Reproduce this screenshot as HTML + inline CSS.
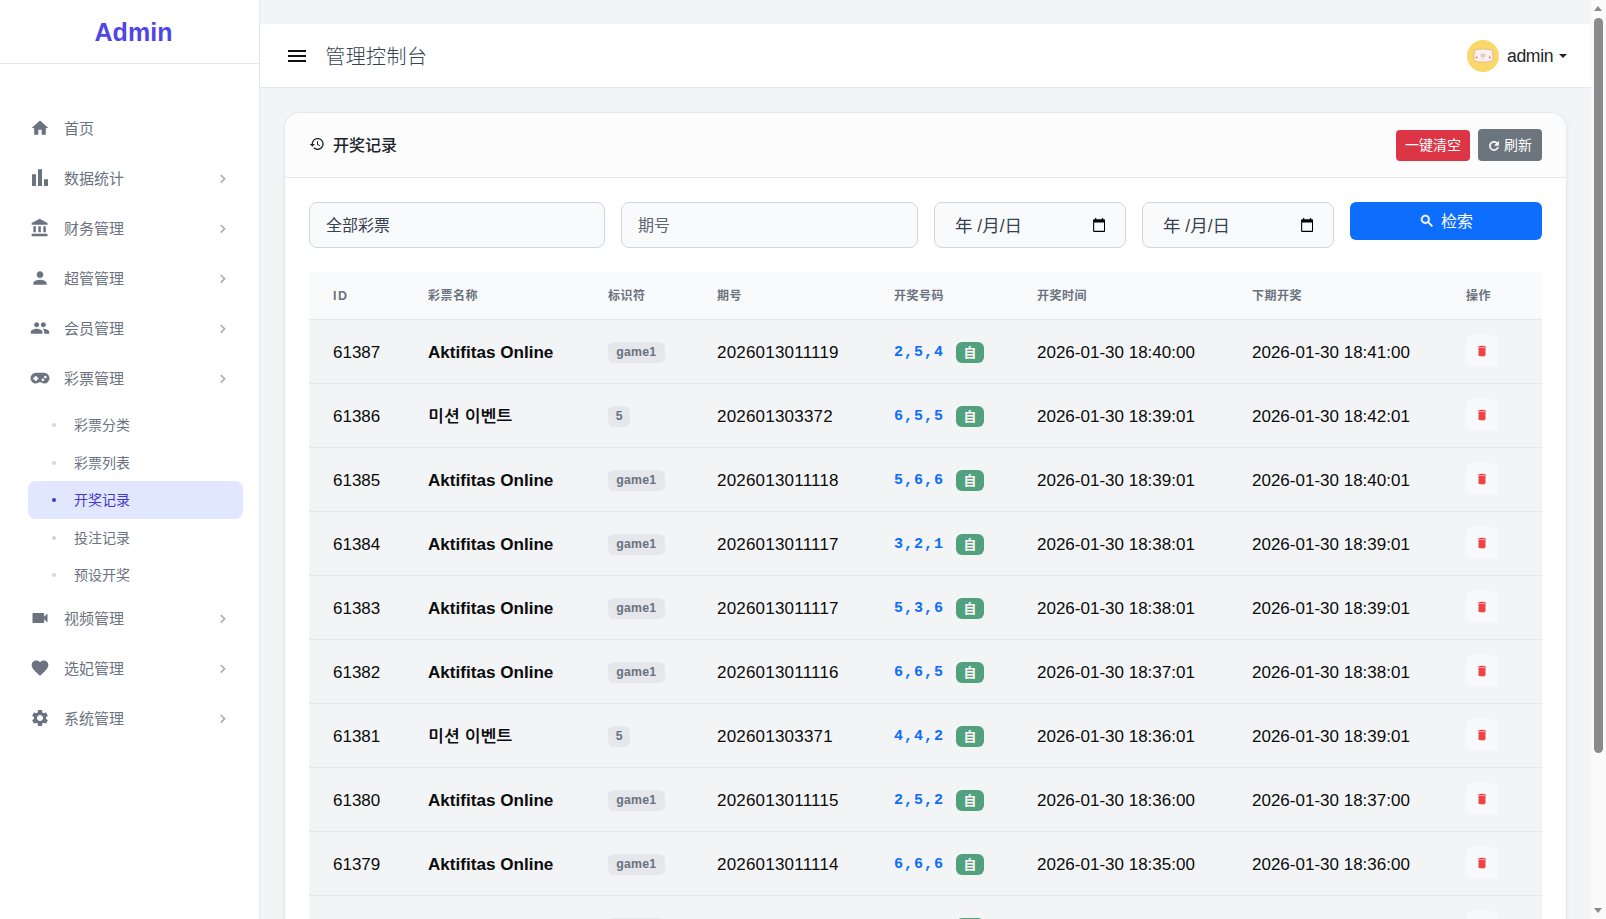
<!DOCTYPE html>
<html lang="zh-CN">
<head>
<meta charset="utf-8">
<title>管理控制台</title>
<style>
*{box-sizing:border-box;margin:0;padding:0}
html,body{width:1606px;height:919px;overflow:hidden}
body{font-family:"Liberation Sans","Noto Sans CJK SC","NanumGothic",sans-serif;background:#f3f4f6;color:#111;position:relative}
svg{display:block}
.abs{position:absolute}
/* sidebar */
#side{position:absolute;left:0;top:0;width:260px;height:919px;background:#fff;border-right:1px solid #e5e7eb}
#brand{position:absolute;left:0;top:0;width:259px;height:64px;border-bottom:1px solid #e5e7eb;text-align:center;line-height:64.500px;font-size:25px;font-weight:700;color:#4f46e5;padding-left:8px;letter-spacing:.05px}
.nav{position:absolute;left:16px;width:227px;height:44px;color:#6b7280;font-size:15px;line-height:44px}
.nav .ic{position:absolute;left:14px;top:11.25px;width:20px;height:20px;fill:#6b7280}
.nav .tx{position:absolute;left:48px;top:0}
.nav .ch{position:absolute;left:198.1px;top:12.5px;width:17.5px;height:17.5px;fill:#a3a8b3}
.sub{position:absolute;left:28px;width:215px;height:38px;border-radius:8px;color:#6b7280;font-size:14px;line-height:38px}
.sub .dot{position:absolute;left:24px;top:17px;width:4px;height:4px;border-radius:50%;background:#d1d5db}
.sub .tx{position:absolute;left:46px;top:0}
.sub.on{background:#e0e7ff;color:#4338ca}
.sub.on .dot{background:#4338ca}
/* top bar */
#top{position:absolute;left:260px;top:24px;width:1331px;height:64px;background:#fff;border-bottom:1px solid #e5e7eb}
#top .menu{position:absolute;left:25px;top:20px;width:24px;height:24px;fill:#111}
#top .ttl{position:absolute;left:65.3px;top:1px;line-height:64px;font-size:20px;font-weight:300;letter-spacing:.4px;color:#374151}
#top .av{position:absolute;left:1207px;top:16px;width:32px;height:32px;border-radius:50%;background:#fcd76c;overflow:hidden}
#top .un{position:absolute;left:1247px;top:0;line-height:65px;font-size:17.6px;letter-spacing:-.35px;color:#212529}
#top .caret{position:absolute;left:1299px;top:30px;width:0;height:0;border-left:4px solid transparent;border-right:4px solid transparent;border-top:4.500px solid #212529}
/* scrollbar */
#sb{position:absolute;left:1591px;top:0;width:15px;height:919px;background:#fafafa}
#sb .th{position:absolute;left:3px;top:18px;width:9px;height:735px;border-radius:5px;background:#8b8b8b}
#sb .up{position:absolute;left:3px;top:6px;width:0;height:0;border-left:4.700px solid transparent;border-right:4.700px solid transparent;border-bottom:5px solid #8b8b8b}
#sb .dn{position:absolute;left:3px;top:908px;width:0;height:0;border-left:4.700px solid transparent;border-right:4.700px solid transparent;border-top:5px solid #8b8b8b}
/* card */
#card{position:absolute;left:284px;top:112px;width:1283px;height:830px;background:#fff;border:1px solid #e5e7eb;border-radius:16px;overflow:hidden;box-shadow:0 1px 4px rgba(0,0,0,.05)}
#ci{position:absolute;left:1px;top:1px;width:1279px;height:828px}
#chd{position:absolute;left:-1px;top:-1px;width:1281px;height:65px;background:#fcfcfd;border-bottom:1px solid #e5e7eb}
#chd .hi{position:absolute;left:24.3px;top:23.300px;width:16px;height:16px;fill:#212529}
#chd .ht{position:absolute;left:48px;top:.600px;line-height:63px;font-size:16px;font-weight:500;color:#212529}
.btn{position:absolute;color:#fff;font-size:14px;border-radius:4px;text-align:center}
#b1{left:1111px;top:17px;width:74px;height:31px;line-height:31px;background:#dc3545}
#b2{left:1193px;top:16px;width:64px;height:32px;line-height:33px;background:#6c757d;padding-left:16px}
#b2 svg{position:absolute;left:9px;top:9.500px;width:14px;height:14px;fill:#fff;stroke:#fff;stroke-width:.9}
.inp{position:absolute;top:88px;height:46px;border:1px solid #d1d5db;border-radius:8px;background:#f9fafb;font-size:16px;line-height:46px;padding-left:16px;color:#374151}
.inp.ph{color:#5d6672}
.inp .cal{position:absolute;right:19.8px;top:14.600px;width:12.200px;height:14px}
.inp.dt{padding-left:20px;font-size:17.500px;line-height:46px}
#b3{left:1064px;top:88px;width:192px;height:38px;line-height:39px;background:#0d6efd;border-radius:6px;font-size:16px;padding-left:22px}
#b3 svg{position:absolute;left:69px;top:11px;width:16px;height:16px;fill:#fff;stroke:#fff;stroke-width:.9}
/* table */
table{position:absolute;left:23px;top:158px;width:1233px;border-collapse:separate;border-spacing:0;table-layout:fixed}
th{height:48px;background:#f9fafb;border-bottom:1px solid #e5e7eb;text-align:left;padding:0 0 1.500px 24px;font-size:12px;font-weight:700;color:#6b7280;letter-spacing:.5px}
th.id{font-size:12.500px;letter-spacing:1.600px;padding:1.500px 0 0 24px}
td{height:64px;background:#f3f4f6;border-bottom:1px solid #e5e7eb;padding:2px 0 0 24px;font-size:17px;color:#0b0b0b;white-space:nowrap}
td.nm{font-weight:700;font-size:17.1px}
td.qh{letter-spacing:.2px}
td.kr{font-family:"Liberation Sans","NanumGothic","Noto Sans CJK KR",sans-serif;font-size:16.500px;letter-spacing:.4px}
.bd{display:inline-block;height:21px;line-height:21px;width:56.700px;text-align:center;border-radius:6px;background:#e5e7eb;color:#6b7280;font-size:12.300px;letter-spacing:.2px;font-weight:700;vertical-align:middle}
.bd.f{width:22.400px}
.num{font-family:"Liberation Mono","DejaVu Sans Mono",monospace;font-weight:700;color:#0d6efd;font-size:15px;letter-spacing:1px;vertical-align:middle}
.zi{display:inline-block;width:28px;height:21px;line-height:21px;border-radius:6px;background:#50a17c;color:#fff;font-size:12.800px;font-weight:700;text-align:center;vertical-align:middle;margin-left:12px}
.del{display:block;width:32px;height:32px;border-radius:6px;background:#f8f9fa;position:relative;top:-1.100px}
.del svg{position:absolute;left:9px;top:9px;width:14px;height:14px;fill:#ef4444}
</style>
</head>
<body>
<div id="side">
  <div id="brand">Admin</div>
  <div class="nav" style="top:107px"><svg class="ic" viewBox="0 0 24 24"><path d="M10 20v-6h4v6h5v-8h3L12 3 2 12h3v8z"/></svg><span class="tx">首页</span></div>
  <div class="nav" style="top:157px"><svg class="ic" viewBox="0 0 24 24"><path d="M2.4 7.5h4.8v14H2.4zM9.600 1.500h4.800v20H9.600zM16.800 13.500h4.800v8h-4.800z"/></svg><span class="tx">数据统计</span><svg class="ch" viewBox="0 0 24 24"><path d="M10 6L8.59 7.41 13.17 12l-4.58 4.59L10 18l6-6z"/></svg></div>
  <div class="nav" style="top:207px"><svg class="ic" viewBox="0 0 24 24"><path d="M4 10v7h3v-7H4zm6 0v7h3v-7h-3zM2 22h19v-3H2v3zm14-12v7h3v-7h-3zm-4.5-9L2 6v2h19V6l-9.5-5z"/></svg><span class="tx">财务管理</span><svg class="ch" viewBox="0 0 24 24"><path d="M10 6L8.59 7.41 13.17 12l-4.58 4.59L10 18l6-6z"/></svg></div>
  <div class="nav" style="top:257px"><svg class="ic" viewBox="0 0 24 24"><path d="M12 12c2.21 0 4-1.79 4-4s-1.79-4-4-4-4 1.79-4 4 1.79 4 4 4zm0 2c-2.67 0-8 1.34-8 4v2h16v-2c0-2.66-5.33-4-8-4z"/></svg><span class="tx">超管管理</span><svg class="ch" viewBox="0 0 24 24"><path d="M10 6L8.59 7.41 13.17 12l-4.58 4.59L10 18l6-6z"/></svg></div>
  <div class="nav" style="top:307px"><svg class="ic" viewBox="0 0 24 24"><path d="M16 11c1.66 0 2.99-1.34 2.99-3S17.66 5 16 5c-1.66 0-3 1.34-3 3s1.34 3 3 3zm-8 0c1.66 0 2.99-1.34 2.99-3S9.66 5 8 5C6.34 5 5 6.34 5 8s1.34 3 3 3zm0 2c-2.33 0-7 1.17-7 3.5V19h14v-2.5c0-2.33-4.67-3.5-7-3.5zm8 0c-.29 0-.62.02-.97.05 1.16.84 1.97 1.97 1.97 3.45V19h6v-2.5c0-2.33-4.67-3.5-7-3.5z"/></svg><span class="tx">会员管理</span><svg class="ch" viewBox="0 0 24 24"><path d="M10 6L8.59 7.41 13.17 12l-4.58 4.59L10 18l6-6z"/></svg></div>
  <div class="nav" style="top:357px"><svg class="ic" viewBox="0 0 24 24"><path fill-rule="evenodd" d="M7 5.8H17A6.4 6.4 0 0 1 17 18.6C15.300 18.600 14 17.600 12.900 17.100H11.100C10 17.600 8.700 18.600 7 18.600A6.4 6.4 0 0 1 7 5.8ZM5.8 9.6V11.5H3.9V13.7H5.8V15.6H8V13.7H9.9V11.5H8V9.6ZM18.4 9.3A1.6 1.6 0 1 0 18.4 12.5A1.6 1.6 0 1 0 18.4 9.3ZM15.5 12.6A1.6 1.6 0 1 0 15.5 15.8A1.6 1.6 0 1 0 15.5 12.6Z"/></svg><span class="tx">彩票管理</span><svg class="ch" viewBox="0 0 24 24"><path d="M10 6L8.59 7.41 13.17 12l-4.58 4.59L10 18l6-6z"/></svg></div>
  <div class="nav" style="top:597px"><svg class="ic" viewBox="0 0 24 24"><path d="M17 10.5V7c0-.55-.45-1-1-1H4c-.55 0-1 .45-1 1v10c0 .55.45 1 1 1h12c.55 0 1-.45 1-1v-3.5l4 4v-11l-4 4z"/></svg><span class="tx">视频管理</span><svg class="ch" viewBox="0 0 24 24"><path d="M10 6L8.59 7.41 13.17 12l-4.58 4.59L10 18l6-6z"/></svg></div>
  <div class="nav" style="top:647px"><svg class="ic" viewBox="0 0 24 24"><path d="M12 21.35l-1.45-1.32C5.4 15.36 2 12.28 2 8.5 2 5.42 4.42 3 7.5 3c1.74 0 3.41.81 4.5 2.09C13.09 3.81 14.76 3 16.5 3 19.58 3 22 5.42 22 8.5c0 3.78-3.4 6.86-8.55 11.54L12 21.35z"/></svg><span class="tx">选妃管理</span><svg class="ch" viewBox="0 0 24 24"><path d="M10 6L8.59 7.41 13.17 12l-4.58 4.59L10 18l6-6z"/></svg></div>
  <div class="nav" style="top:697px"><svg class="ic" viewBox="0 0 24 24"><path d="M19.14 12.94c.04-.3.06-.61.06-.94 0-.32-.02-.64-.07-.94l2.03-1.58c.18-.14.23-.41.12-.61l-1.92-3.32c-.12-.22-.37-.29-.59-.22l-2.39.96c-.5-.38-1.03-.7-1.62-.94l-.36-2.54c-.04-.24-.24-.41-.48-.41h-3.84c-.24 0-.43.17-.47.41l-.36 2.54c-.59.24-1.13.57-1.62.94l-2.39-.96c-.22-.08-.47 0-.59.22L2.74 8.87c-.12.21-.08.47.12.61l2.03 1.58c-.05.3-.09.63-.09.94s.02.64.07.94l-2.03 1.58c-.18.14-.23.41-.12.61l1.92 3.32c.12.22.37.29.59.22l2.39-.96c.5.38 1.03.7 1.62.94l.36 2.54c.05.24.24.41.48.41h3.84c.24 0 .44-.17.47-.41l.36-2.54c.59-.24 1.13-.56 1.62-.94l2.39.96c.22.08.47 0 .59-.22l1.92-3.32c.12-.22.07-.47-.12-.61l-2.01-1.58zM12 15.6c-1.98 0-3.6-1.62-3.6-3.6s1.62-3.6 3.6-3.6 3.6 1.62 3.6 3.6-1.62 3.6-3.6 3.6z"/></svg><span class="tx">系统管理</span><svg class="ch" viewBox="0 0 24 24"><path d="M10 6L8.59 7.41 13.17 12l-4.58 4.59L10 18l6-6z"/></svg></div>
  <div class="sub" style="top:406px"><i class="dot"></i><span class="tx">彩票分类</span></div>
  <div class="sub" style="top:443.5px"><i class="dot"></i><span class="tx">彩票列表</span></div>
  <div class="sub on" style="top:481px"><i class="dot"></i><span class="tx">开奖记录</span></div>
  <div class="sub" style="top:518.5px"><i class="dot"></i><span class="tx">投注记录</span></div>
  <div class="sub" style="top:556px"><i class="dot"></i><span class="tx">预设开奖</span></div>
</div>
<div id="top">
  <svg class="menu" viewBox="0 0 24 24"><path d="M3 18h18v-2H3v2zm0-5h18v-2H3v2zm0-7v2h18V6H3z"/></svg>
  <div class="ttl">管理控制台</div>
  <div class="av"><svg viewBox="0 0 32 32" width="32" height="32"><path d="M7.700 9.800 10 9.700Q16 8.500 22.300 9.700L25.100 9.800 25.300 12.200Q26.500 16 25.700 19.500Q25.100 21 23 21.400Q16 22.500 9.500 21.400Q7.500 21 7.100 19.500Q6.300 16 7.500 12.200Z" fill="#fbefef" stroke="#6f6767" stroke-width=".35" stroke-dasharray="1.2 .5"/><rect x="14.100" y="14.100" width="3.700" height="2.600" rx=".7" fill="#f3cfcf" stroke="#c9a3a3" stroke-width=".5"/><path d="M8.200 17.400 10.200 16.200V18.600ZM24.100 17.400 22.100 16.200V18.600Z" fill="#f4511e"/><rect x="15.200" y="18.500" width="1.600" height="1.100" rx=".3" fill="#d9c9c9"/><circle cx="13.400" cy="11.700" r=".35" fill="#d8caca"/><circle cx="19.500" cy="11.700" r=".35" fill="#d8caca"/></svg></div>
  <div class="un">admin</div>
  <div class="caret"></div>
</div>
<div id="card"><div id="ci">
  <div id="chd">
    <svg class="hi" viewBox="0 0 24 24"><path d="M13 3c-4.97 0-9 4.03-9 9H1l3.89 3.89.07.14L9 12H6c0-3.87 3.13-7 7-7s7 3.13 7 7-3.13 7-7 7c-1.93 0-3.68-.79-4.94-2.06l-1.42 1.42C8.27 19.99 10.51 21 13 21c4.97 0 9-4.03 9-9s-4.03-9-9-9zm-1 5v5l4.28 2.54.72-1.21-3.5-2.08V8H12z"/></svg>
    <div class="ht">开奖记录</div>
    <div class="btn" id="b1">一键清空</div>
    <div class="btn" id="b2"><svg viewBox="0 0 24 24"><path d="M17.65 6.35C16.2 4.9 14.21 4 12 4c-4.42 0-7.99 3.58-7.99 8s3.57 8 7.99 8c3.73 0 6.84-2.55 7.73-6h-2.08c-.82 2.33-3.04 4-5.65 4-3.31 0-6-2.69-6-6s2.69-6 6-6c1.66 0 3.14.69 4.22 1.78L13 11h7V4l-2.35 2.35z"/></svg>刷新</div>
  </div>
  <div class="inp" style="left:23px;width:296px">全部彩票</div>
  <div class="inp ph" style="left:335px;width:297px">期号</div>
  <div class="inp dt" style="left:648px;width:192px">年 /月/日<svg class="cal" viewBox="0 0 12 14"><path fill="#000" fill-rule="evenodd" d="M2 0h1.200v1.300h5.600V0H10v1.300h1a1 1 0 0 1 1 1V13a1 1 0 0 1-1 1H1a1 1 0 0 1-1-1V2.300a1 1 0 0 1 1-1h1ZM1.100 4.400v8.400h9.800V4.400Z"/></svg></div>
  <div class="inp dt" style="left:856px;width:192px">年 /月/日<svg class="cal" viewBox="0 0 12 14"><path fill="#000" fill-rule="evenodd" d="M2 0h1.200v1.300h5.600V0H10v1.300h1a1 1 0 0 1 1 1V13a1 1 0 0 1-1 1H1a1 1 0 0 1-1-1V2.300a1 1 0 0 1 1-1h1ZM1.100 4.400v8.400h9.800V4.400Z"/></svg></div>
  <div class="btn" id="b3"><svg viewBox="0 0 24 24"><path d="M15.5 14h-.79l-.28-.27C15.41 12.59 16 11.11 16 9.5 16 5.91 13.09 3 9.5 3S3 5.91 3 9.5 5.91 16 9.5 16c1.61 0 3.09-.59 4.23-1.57l.27.28v.79l5 4.99L20.49 19l-4.99-5zm-6 0C7.01 14 5 11.99 5 9.5S7.01 5 9.5 5 14 7.01 14 9.5 11.99 14 9.5 14z"/></svg>检索</div>
  <table>
    <colgroup><col style="width:95px"><col style="width:180px"><col style="width:109px"><col style="width:177px"><col style="width:143px"><col style="width:215px"><col style="width:214px"><col style="width:100px"></colgroup>
    <thead><tr><th class="id">ID</th><th>彩票名称</th><th>标识符</th><th>期号</th><th>开奖号码</th><th>开奖时间</th><th>下期开奖</th><th>操作</th></tr></thead>
    <tbody>
    <tr><td>61387</td><td class="nm">Aktifitas Online</td><td><span class="bd">game1</span></td><td class="qh">2026013011119</td><td><span class="num">2,5,4</span><span class="zi">自</span></td><td>2026-01-30 18:40:00</td><td>2026-01-30 18:41:00</td><td><span class="del"><svg viewBox="0 0 24 24"><path d="M6 19c0 1.1.9 2 2 2h8c1.1 0 2-.9 2-2V7H6v12zM19 4h-3.5l-1-1h-5l-1 1H5v2h14V4z"/></svg></span></td></tr>
    <tr><td>61386</td><td class="nm kr">미션 이벤트</td><td><span class="bd f">5</span></td><td class="qh">202601303372</td><td><span class="num">6,5,5</span><span class="zi">自</span></td><td>2026-01-30 18:39:01</td><td>2026-01-30 18:42:01</td><td><span class="del"><svg viewBox="0 0 24 24"><path d="M6 19c0 1.1.9 2 2 2h8c1.1 0 2-.9 2-2V7H6v12zM19 4h-3.5l-1-1h-5l-1 1H5v2h14V4z"/></svg></span></td></tr>
    <tr><td>61385</td><td class="nm">Aktifitas Online</td><td><span class="bd">game1</span></td><td class="qh">2026013011118</td><td><span class="num">5,6,6</span><span class="zi">自</span></td><td>2026-01-30 18:39:01</td><td>2026-01-30 18:40:01</td><td><span class="del"><svg viewBox="0 0 24 24"><path d="M6 19c0 1.1.9 2 2 2h8c1.1 0 2-.9 2-2V7H6v12zM19 4h-3.5l-1-1h-5l-1 1H5v2h14V4z"/></svg></span></td></tr>
    <tr><td>61384</td><td class="nm">Aktifitas Online</td><td><span class="bd">game1</span></td><td class="qh">2026013011117</td><td><span class="num">3,2,1</span><span class="zi">自</span></td><td>2026-01-30 18:38:01</td><td>2026-01-30 18:39:01</td><td><span class="del"><svg viewBox="0 0 24 24"><path d="M6 19c0 1.1.9 2 2 2h8c1.1 0 2-.9 2-2V7H6v12zM19 4h-3.5l-1-1h-5l-1 1H5v2h14V4z"/></svg></span></td></tr>
    <tr><td>61383</td><td class="nm">Aktifitas Online</td><td><span class="bd">game1</span></td><td class="qh">2026013011117</td><td><span class="num">5,3,6</span><span class="zi">自</span></td><td>2026-01-30 18:38:01</td><td>2026-01-30 18:39:01</td><td><span class="del"><svg viewBox="0 0 24 24"><path d="M6 19c0 1.1.9 2 2 2h8c1.1 0 2-.9 2-2V7H6v12zM19 4h-3.5l-1-1h-5l-1 1H5v2h14V4z"/></svg></span></td></tr>
    <tr><td>61382</td><td class="nm">Aktifitas Online</td><td><span class="bd">game1</span></td><td class="qh">2026013011116</td><td><span class="num">6,6,5</span><span class="zi">自</span></td><td>2026-01-30 18:37:01</td><td>2026-01-30 18:38:01</td><td><span class="del"><svg viewBox="0 0 24 24"><path d="M6 19c0 1.1.9 2 2 2h8c1.1 0 2-.9 2-2V7H6v12zM19 4h-3.5l-1-1h-5l-1 1H5v2h14V4z"/></svg></span></td></tr>
    <tr><td>61381</td><td class="nm kr">미션 이벤트</td><td><span class="bd f">5</span></td><td class="qh">202601303371</td><td><span class="num">4,4,2</span><span class="zi">自</span></td><td>2026-01-30 18:36:01</td><td>2026-01-30 18:39:01</td><td><span class="del"><svg viewBox="0 0 24 24"><path d="M6 19c0 1.1.9 2 2 2h8c1.1 0 2-.9 2-2V7H6v12zM19 4h-3.5l-1-1h-5l-1 1H5v2h14V4z"/></svg></span></td></tr>
    <tr><td>61380</td><td class="nm">Aktifitas Online</td><td><span class="bd">game1</span></td><td class="qh">2026013011115</td><td><span class="num">2,5,2</span><span class="zi">自</span></td><td>2026-01-30 18:36:00</td><td>2026-01-30 18:37:00</td><td><span class="del"><svg viewBox="0 0 24 24"><path d="M6 19c0 1.1.9 2 2 2h8c1.1 0 2-.9 2-2V7H6v12zM19 4h-3.5l-1-1h-5l-1 1H5v2h14V4z"/></svg></span></td></tr>
    <tr><td>61379</td><td class="nm">Aktifitas Online</td><td><span class="bd">game1</span></td><td class="qh">2026013011114</td><td><span class="num">6,6,6</span><span class="zi">自</span></td><td>2026-01-30 18:35:00</td><td>2026-01-30 18:36:00</td><td><span class="del"><svg viewBox="0 0 24 24"><path d="M6 19c0 1.1.9 2 2 2h8c1.1 0 2-.9 2-2V7H6v12zM19 4h-3.5l-1-1h-5l-1 1H5v2h14V4z"/></svg></span></td></tr>
    <tr><td>61378</td><td class="nm">Aktifitas Online</td><td><span class="bd">game1</span></td><td class="qh">2026013011113</td><td><span class="num">1,3,4</span><span class="zi">自</span></td><td>2026-01-30 18:34:00</td><td>2026-01-30 18:35:00</td><td><span class="del"><svg viewBox="0 0 24 24"><path d="M6 19c0 1.1.9 2 2 2h8c1.1 0 2-.9 2-2V7H6v12zM19 4h-3.5l-1-1h-5l-1 1H5v2h14V4z"/></svg></span></td></tr>
    </tbody>
  </table>
</div></div>
<div id="sb"><div class="up"></div><div class="th"></div><div class="dn"></div></div>
</body>
</html>
